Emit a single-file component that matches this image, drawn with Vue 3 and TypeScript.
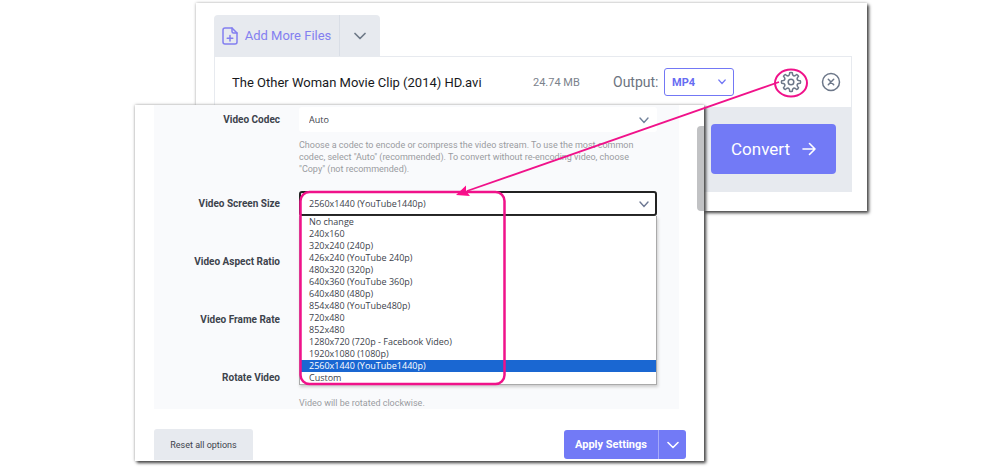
<script setup lang="ts">
import { ref } from 'vue'

const sizes: string[] = [
  'No change',
  '240x160',
  '320x240 (240p)',
  '426x240 (YouTube 240p)',
  '480x320 (320p)',
  '640x360 (YouTube 360p)',
  '640x480 (480p)',
  '854x480 (YouTube480p)',
  '720x480',
  '852x480',
  '1280x720 (720p - Facebook Video)',
  '1920x1080 (1080p)',
  '2560x1440 (YouTube1440p)',
  'Custom',
]
const screenSize = ref<string>('2560x1440 (YouTube1440p)')
const codec = ref<string>('Auto')
const format = ref<string>('MP4')

function gearPath(teeth: number, outer: number, inner: number): string {
  const at = (r: number, deg: number): string => {
    const a = (deg * Math.PI) / 180
    return `${(12 + r * Math.sin(a)).toFixed(2)} ${(12 - r * Math.cos(a)).toFixed(2)}`
  }
  let d = ''
  for (let i = 0; i < teeth; i++) {
    const c = (i * 360) / teeth
    d += `${i === 0 ? 'M' : 'L'}${at(inner + 1, c - 11)}L${at(outer, c - 8)}`
    d += `Q${at(outer + 0.5, c)} ${at(outer, c + 8)}L${at(inner + 1, c + 11)}`
    d += `Q${at(inner - 1, c + 22.5)} ${at(inner + 1, c + 34)}`
  }
  return d + 'Z'
}
const gear = gearPath(8, 9.4, 6.8)
</script>

<template>
  <main class="stage">
    <section class="window files">
      <div class="tabs">
        <button type="button" class="add">
          <svg width="16" height="18" viewBox="0 0 16 18" fill="none" stroke="currentColor" stroke-width="1.5" stroke-linejoin="round" stroke-linecap="round">
            <path d="M3 1H10L15 6V15Q15 17 13 17H3Q1 17 1 15V3Q1 1 3 1Z" />
            <path d="M10 1V4.500Q10 6 11.500 6H15M8 8.500V14M5.200 11.200H10.800" />
          </svg>
          Add More Files
        </button>
        <button type="button" class="more" aria-label="More">
          <svg width="12" height="8" viewBox="0 0 12 8" fill="none" stroke="currentColor" stroke-width="1.700" stroke-linecap="round" stroke-linejoin="round"><path d="M1 1.500 6 6.500 11 1.500" /></svg>
        </button>
      </div>
      <div class="card">
        <div class="file">
          <span class="name">The Other Woman Movie Clip (2014) HD.avi</span>
          <span class="weight">24.74 MB</span>
          <label for="format" class="output">Output:</label>
          <span class="pick">
            <select id="format" v-model="format" class="format">
              <option>MP4</option>
            </select>
            <svg class="caret" width="8" height="6" viewBox="0 0 8 6" fill="none" stroke="#7378f5" stroke-width="1.200" stroke-linecap="round"><path d="M.8 1 4 4.500 7.200 1" /></svg>
          </span>
          <button type="button" class="icon cog" aria-label="Settings">
            <svg width="24" height="24" viewBox="0 0 24 24" fill="none" stroke="currentColor" stroke-width="1.500" stroke-linejoin="round"><path :d="gear" /><circle cx="12" cy="12" r="2.800" /></svg>
          </button>
          <button type="button" class="icon" aria-label="Remove">
            <svg width="20" height="20" viewBox="0 0 20 20" fill="none" stroke="currentColor" stroke-width="1.500" stroke-linecap="round"><circle cx="10" cy="10" r="8.500" /><path d="M7.300 7.300 12.700 12.700M12.700 7.300 7.300 12.700" /></svg>
          </button>
        </div>
        <div class="actions">
          <button type="button" class="convert">
            Convert
            <svg width="14" height="14" viewBox="0 0 14 14" fill="none" stroke="currentColor" stroke-width="1.600" stroke-linecap="round" stroke-linejoin="round"><path d="M1 7H13M7.500 1.500 13 7 7.500 12.500" /></svg>
          </button>
        </div>
      </div>
    </section>

    <section class="window settings">
      <div class="scrollbar"></div>
      <form class="panel" @submit.prevent>
        <div class="row">
          <label for="codec">Video Codec</label>
          <div class="field">
            <span class="pick">
              <select id="codec" v-model="codec"><option>Auto</option></select>
              <svg class="caret" width="10" height="7" viewBox="0 0 10 7" fill="none" stroke="#70819a" stroke-width="1.400" stroke-linecap="round"><path d="M1 1 5 5.500 9 1" /></svg>
            </span>
            <p class="help">Choose a codec to encode or compress the video stream. To use the most common<br />codec, select "Auto" (recommended). To convert without re-encoding video, choose<br />"Copy" (not recommended).</p>
          </div>
        </div>
        <div class="row">
          <label for="size">Video Screen Size</label>
          <div class="field">
            <span class="pick">
              <select id="size" v-model="screenSize" class="open">
                <option v-for="s in sizes" :key="s">{{ s }}</option>
              </select>
              <svg class="caret" width="10" height="7" viewBox="0 0 10 7" fill="none" stroke="#6d7893" stroke-width="1.400" stroke-linecap="round"><path d="M1 1 5 5.500 9 1" /></svg>
            </span>
            <ul class="menu" role="listbox">
              <li v-for="s in sizes" :key="s" role="option" :aria-selected="s === screenSize" :class="{ chosen: s === screenSize }" @click="screenSize = s">{{ s }}</li>
            </ul>
          </div>
        </div>
        <div class="row">
          <label for="ratio">Video Aspect Ratio</label>
          <div class="field"><select id="ratio" class="plain"></select></div>
        </div>
        <div class="row">
          <label for="rate">Video Frame Rate</label>
          <div class="field"><select id="rate" class="plain"></select></div>
        </div>
        <div class="row">
          <label for="rotate">Rotate Video</label>
          <div class="field">
            <select id="rotate" class="plain"></select>
            <p class="help">Video will be rotated clockwise.</p>
          </div>
        </div>
      </form>
      <footer class="bar">
        <button type="button" class="reset">Reset all options</button>
        <div class="split">
          <button type="button" class="apply">Apply Settings</button>
          <button type="button" class="drop" aria-label="More apply options">
            <svg width="12" height="8" viewBox="0 0 12 8" fill="none" stroke="currentColor" stroke-width="1.600" stroke-linecap="round" stroke-linejoin="round"><path d="M1 1.500 6 6.500 11 1.500" /></svg>
          </button>
        </div>
      </footer>
    </section>

    <svg class="notes" viewBox="0 0 1000 470" preserveAspectRatio="none" fill="none" stroke="#f0128a">
      <ellipse cx="791" cy="83" rx="16" ry="13.500" stroke-width="2" />
      <path d="M779 82 467 191" stroke-width="1.800" />
      <path d="M456 195 466 185.500 466 191 470 196Z" fill="#ff0d8a" stroke="none" />
      <rect x="300.500" y="192" width="204" height="192" rx="9" stroke-width="2.500" />
    </svg>
  </main>
</template>

<style>
body {
  margin: 0;
  background: #fff;
}
</style>

<style scoped>
.stage,
.stage * {
  box-sizing: border-box;
}
.stage {
  position: relative;
  display: grid;
  grid-template-columns: 135fr 61fr 508fr 163fr 133fr;
  align-items: start;
  padding: 3px 0 9px;
  font-family: Roboto, "Open Sans", sans-serif;
  color: #3d434c;
}
button,
select {
  font: inherit;
  color: inherit;
  margin: 0;
  border: 0;
}
button {
  display: flex;
  align-items: center;
  justify-content: center;
  padding: 0;
  cursor: pointer;
}
.window {
  min-width: 0;
  background: #fff;
}
.files {
  grid-area: 1 / 3 / 2 / 5;
  padding: 12px 15px 19px 18px;
  box-shadow: 2px 2px 3px #444, 0 0 3px #bbb;
}
.tabs {
  display: flex;
  width: 166px;
  height: 41px;
  border-radius: 4px 4px 0 0;
  overflow: hidden;
}
.tabs button {
  background: #e7eaef;
}
.tabs .add {
  flex: 1;
  gap: 7px;
  color: #837ff0;
  font-size: 13px;
  white-space: nowrap;
}
.tabs .more {
  width: 41px;
  border-left: 1px solid #d9dee6;
  color: #6e7a88;
}
.card {
  border: 1px solid #e7eaef;
}
.file {
  display: flex;
  align-items: center;
  height: 50px;
  padding: 0 8px 0 17px;
}
.name {
  flex: 1;
  font-size: 13px;
  color: #17191c;
  white-space: nowrap;
}
.weight {
  width: 80px;
  font-size: 11px;
  color: #7b828c;
}
.output {
  width: 51px;
  font-size: 14px;
  color: #6c7480;
}
.pick {
  position: relative;
  display: block;
}
.caret {
  position: absolute;
  right: 8px;
  top: 50%;
  margin-top: -3px;
  pointer-events: none;
}
select {
  display: block;
  appearance: none;
  width: 100%;
  height: 25px;
  padding: 0 10px;
  border-radius: 3px;
  background: #fff;
}
.format {
  width: 70px;
  height: 28px;
  padding: 0 7px;
  border: 1px solid #7378f5;
  color: #676cf2;
  font-size: 11px;
  font-weight: 700;
}
.icon {
  width: 24px;
  height: 24px;
  margin-left: 16px;
  background: none;
  color: #6c7789;
}
.cog {
  margin-left: 45px;
}
.actions {
  display: flex;
  justify-content: flex-end;
  padding: 17px 15px;
  background: #e7eaef;
}
.convert {
  width: 125px;
  height: 50px;
  gap: 12px;
  border-radius: 4px;
  background: #727af6;
  color: #fff;
  font-size: 17px;
}
.settings {
  grid-area: 1 / 2 / 2 / 4;
  position: relative;
  margin-top: 102px;
  padding-left: 19px;
  box-shadow: 2px 2px 3px #444, 0 0 3px #aaa;
}
.scrollbar {
  position: absolute;
  top: 21px;
  right: 0;
  width: 7px;
  height: 85px;
  border-radius: 4px 0 0 4px;
  background: #c1c2c4;
}
.panel {
  display: flex;
  flex-direction: column;
  gap: 33px;
  margin-right: 25px;
  padding: 2px 22px 0 0;
  background: #f9fafc;
  font-family: "Open Sans", Roboto, sans-serif;
  font-size: 9px;
}
.row {
  display: grid;
  grid-template-columns: 126px 1fr;
  gap: 19px;
}
.row:first-child {
  margin-bottom: -17px;
}
.row label {
  line-height: 25px;
  text-align: right;
  font-family: Roboto, "Open Sans", sans-serif;
  font-size: 10px;
  font-weight: 700;
}
.field {
  position: relative;
}
.help {
  margin: 7px 0 0;
  font-family: Roboto, "Open Sans", sans-serif;
  font-size: 9px;
  line-height: 12px;
  color: #999ca1;
  white-space: nowrap;
}
.open {
  border: 2px solid #222;
  padding: 0 8px;
}
.plain {
  background: transparent;
}
.menu {
  position: absolute;
  z-index: 1;
  top: 25px;
  left: 0;
  right: 0;
  margin: 0;
  padding: 0;
  border: 1px solid #aaa;
  border-top: 0;
  background: #fff;
  list-style: none;
  box-shadow: 1px 2px 3px #ccc;
}
.menu li {
  height: 12px;
  padding-left: 9px;
  line-height: 12px;
}
.menu .chosen {
  background: #1a67d2;
  color: #fff;
}
.bar {
  display: flex;
  justify-content: space-between;
  align-items: center;
  padding: 20px 18px 1px 0;
}
.reset {
  width: 99px;
  height: 31px;
  border-radius: 3px 3px 0 0;
  background: #e7eaef;
  font-size: 9px;
}
.split {
  display: flex;
  width: 122px;
  height: 29px;
  border-radius: 3px;
  overflow: hidden;
}
.split button {
  background: #727af6;
  color: #fff;
}
.split .apply {
  flex: 1;
  font-size: 11px;
  font-weight: 700;
}
.split .drop {
  width: 28px;
  border-left: 1px solid #a5aafa;
}
.notes {
  position: absolute;
  z-index: 2;
  inset: 0;
  width: 100%;
  height: 470px;
  pointer-events: none;
}
</style>
